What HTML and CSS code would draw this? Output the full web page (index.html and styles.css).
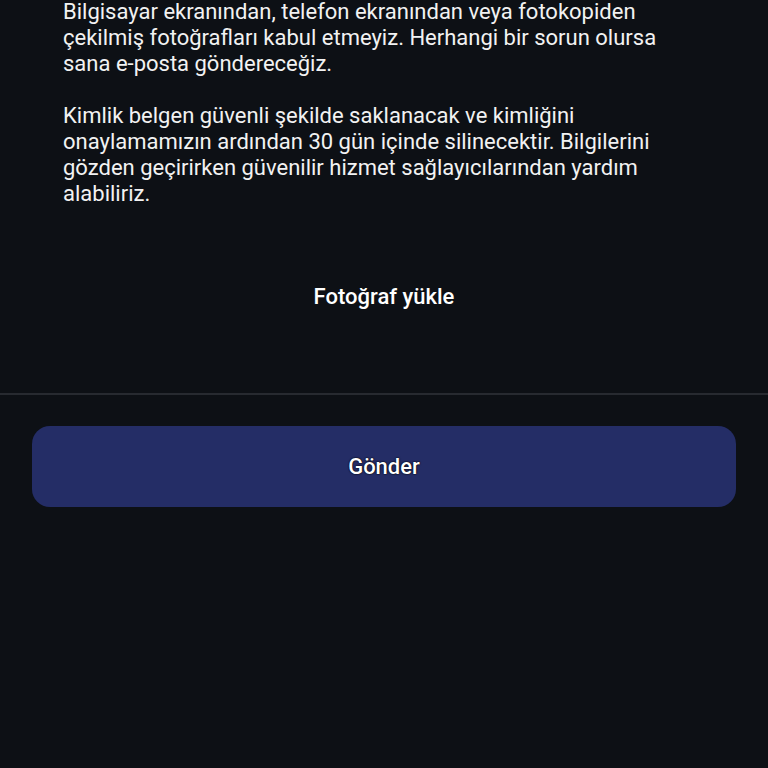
FILE: index.html
```html
<!DOCTYPE html>
<html lang="tr">
<head>
    <meta charset="UTF-8">
    <meta name="viewport" content="width=device-width, initial-scale=1.0">
    <title>Kimlik doğrulama</title>
    <link rel="stylesheet" href="styles.css">
</head>
<body>
    <!-- Info text -->
    <div class="info">
        <p>Bilgisayar ekranından, telefon ekranından veya fotokopiden çekilmiş fotoğrafları kabul etmeyiz. Herhangi bir sorun olursa sana e-posta göndereceğiz.</p>
        <p>Kimlik belgen güvenli şekilde saklanacak ve kimliğini onaylamamızın ardından 30 gün içinde silinecektir. Bilgilerini gözden geçirirken güvenilir hizmet sağlayıcılarından yardım alabiliriz.</p>
    </div>

    <!-- Upload -->
    <div class="upload">
        <button class="upload-button">Fotoğraf yükle</button>
    </div>

    <!-- Footer -->
    <div class="footer">
        <button class="submit-button">Gönder</button>
    </div>
</body>
</html>
```

FILE: styles.css
```css
/* General Styles */
body {
    margin: 0;
    background-color: #0d1015;
    color: #f2f2f2;
    font-family: Roboto, 'Noto Sans', sans-serif;
    height: 768px;
    overflow: hidden;
}

/* Info text */
.info {
    padding: 0 63px;
    margin-top: -1px;
}

.info p {
    margin: 0 0 26px;
    font-size: 22px;
    line-height: 26px;
}

/* Upload */
.upload {
    display: flex;
    justify-content: center;
    padding: 51px 0 83px;
    border-bottom: 2px solid #272a30;
}

.upload-button {
    background: none;
    border: none;
    color: #fff;
    font-family: inherit;
    font-size: 22px;
    font-weight: 500;
    line-height: 26px;
    padding: 0;
}

/* Footer */
.footer {
    padding: 31px 32px 0;
}

.submit-button {
    width: 100%;
    height: 81px;
    background-color: #242d66;
    border: none;
    border-radius: 18px;
    color: #fff;
    font-family: inherit;
    font-size: 22px;
    font-weight: 500;
    text-shadow: 0 0 2px #000, 0 0 1px #000;
}
```
